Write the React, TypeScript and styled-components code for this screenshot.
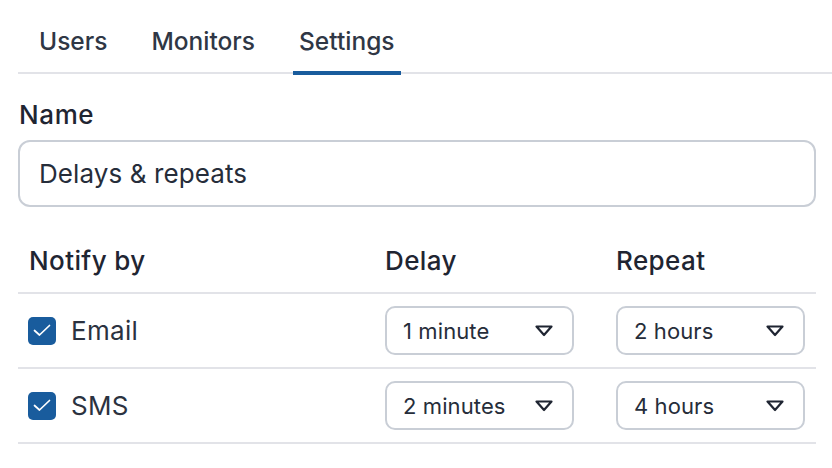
import React from 'react'
import styled, {createGlobalStyle} from 'styled-components'

const GlobalStyle = createGlobalStyle`
  html, body {
    margin: 0;
    padding: 0;
    background: #ffffff;
  }
  body {
    font-family: Inter, "Noto Sans", "Liberation Sans", sans-serif;
    color: #2b3240;
  }
`

const tabs = ['Users', 'Monitors', 'Settings']

const rows = [
  {label: 'Email', delay: '1 minute', repeat: '2 hours'},
  {label: 'SMS', delay: '2 minutes', repeat: '4 hours'},
]

const Check = () => (
  <svg width="18" height="13" viewBox="0 0 18 13" fill="none">
    <path d="M1.5 6.5 L6.5 11 L16.5 1.5" stroke="#ffffff" strokeWidth="1.7" strokeLinecap="round" strokeLinejoin="round" />
  </svg>
)

const Caret = () => (
  <svg width="18" height="12" viewBox="0 0 18 12" fill="none">
    <path d="M1.5 1.5 H16.5 L9 10 Z" stroke="#1f2532" strokeWidth="2.2" strokeLinejoin="round" />
  </svg>
)

const App: React.FC = () => {
  return (
    <>
      <GlobalStyle />
      <StyledPage>
        <StyledTabBar>
          {tabs.map((t) => (
            <StyledTab key={t} active={t === 'Settings'}>
              {t}
            </StyledTab>
          ))}
        </StyledTabBar>
        <StyledForm>
          <StyledLabel>Name</StyledLabel>
          <StyledInput>Delays &amp; repeats</StyledInput>
          <StyledTable>
            <StyledHeadCell first>Notify by</StyledHeadCell>
            <StyledHeadCell>Delay</StyledHeadCell>
            <StyledHeadCell>Repeat</StyledHeadCell>
            {rows.map((r) => (
              <React.Fragment key={r.label}>
                <StyledCell first>
                  <StyledCheckbox>
                    <Check />
                  </StyledCheckbox>
                  <StyledChannel>{r.label}</StyledChannel>
                </StyledCell>
                <StyledCell>
                  <StyledSelect>
                    <span>{r.delay}</span>
                    <Caret />
                  </StyledSelect>
                </StyledCell>
                <StyledCell>
                  <StyledSelect>
                    <span>{r.repeat}</span>
                    <Caret />
                  </StyledSelect>
                </StyledCell>
              </React.Fragment>
            ))}
          </StyledTable>
        </StyledForm>
      </StyledPage>
    </>
  )
}

const StyledPage = styled.div`
  padding-left: 18px;
  width: 814px;
`

const StyledTabBar = styled.div`
  display: flex;
  gap: 32px;
  height: 72px;
  padding-left: 15px;
  border-bottom: 2px solid #e2e3e8;
`

const StyledTab = styled.div<{active?: boolean}>`
  box-sizing: border-box;
  height: 75px;
  padding: 26px 6px 0;
  margin-bottom: -3px;
  font-size: 24.5px;
  line-height: 30px;
  font-weight: 500;
  color: #2f3745;
  border-bottom: 4px solid ${(p) => (p.active ? '#195c9d' : 'transparent')};
`

const StyledForm = styled.div`
  padding-right: 16px;
  display: flex;
  flex-direction: column;
`

const StyledLabel = styled.div`
  margin-top: 25px;
  font-size: 26px;
  line-height: 32px;
  font-weight: 500;
  letter-spacing: 0.6px;
  color: #1f2532;
  padding-left: 1px;
`

const StyledInput = styled.div`
  margin-top: 9px;
  height: 67px;
  box-sizing: border-box;
  border: 2px solid #c9ced6;
  border-radius: 12px;
  display: flex;
  align-items: center;
  padding-left: 19px;
  font-size: 26px;
  letter-spacing: 0.1px;
  color: #262d3a;
`

const StyledTable = styled.div`
  margin-top: 21px;
  display: grid;
  grid-template-columns: 367px 231px 1fr;
`

const StyledHeadCell = styled.div<{first?: boolean}>`
  height: 64px;
  display: flex;
  align-items: center;
  padding-left: ${(p) => (p.first ? '11px' : '0')};
  font-size: 26px;
  font-weight: 500;
  letter-spacing: 0.4px;
  color: #1f2532;
  border-bottom: 2px solid #e2e3e8;
`

const StyledCell = styled.div<{first?: boolean}>`
  height: 73px;
  display: flex;
  align-items: center;
  gap: 15px;
  padding-left: ${(p) => (p.first ? '10px' : '0')};
  border-bottom: 2px solid #e2e3e8;
`

const StyledCheckbox = styled.div`
  width: 28px;
  height: 28px;
  border-radius: 5px;
  background: #195c9d;
  display: flex;
  align-items: center;
  justify-content: center;
`

const StyledChannel = styled.span`
  font-size: 26px;
  letter-spacing: 0.3px;
  color: #2b3240;
`

const StyledSelect = styled.div`
  width: 189px;
  height: 49px;
  box-sizing: border-box;
  border: 2px solid #c9ced6;
  border-radius: 10px;
  display: flex;
  align-items: center;
  justify-content: space-between;
  padding: 0 19px 0 16px;
  font-size: 22px;
  letter-spacing: 0.1px;
  color: #262d3a;
`

export default App
